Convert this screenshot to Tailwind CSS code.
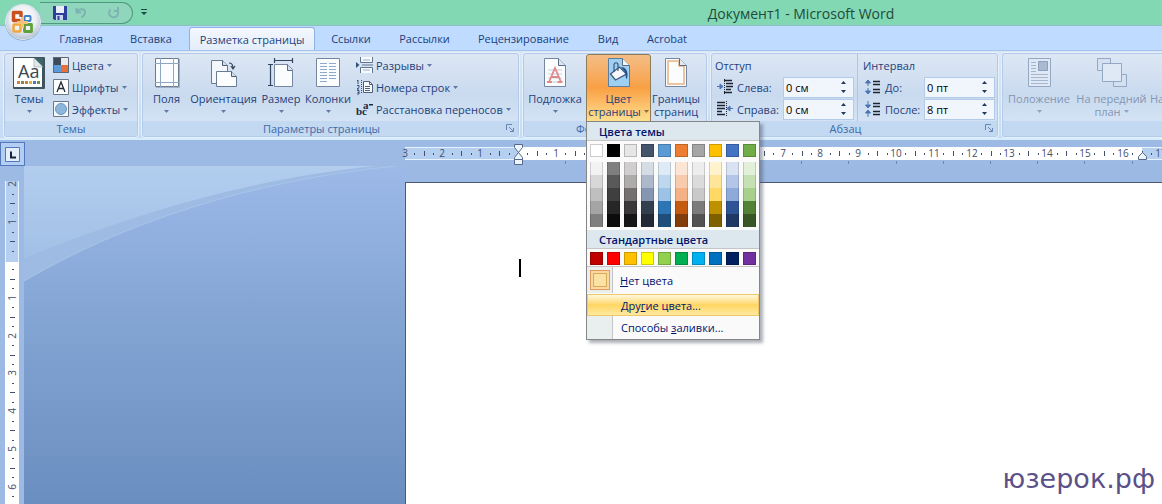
<!DOCTYPE html>
<html lang="ru">
<head>
    <meta charset="UTF-8">
    <meta name="viewport" content="width=device-width, initial-scale=1.0">
    <title>Документ1 - Microsoft Word</title>
    <script src="https://cdn.jsdelivr.net/npm/@tailwindcss/browser@4"></script>
</head>

<body class="min-h-screen flex flex-col overflow-hidden bg-[#9cbae3] font-['Open_Sans','Noto_Sans',sans-serif] text-[11px] leading-[13px] text-[#1f3f7a]">

<!-- Title bar -->
<header class="relative h-[26px] shrink-0 bg-[#82d8b3] border-b border-[#8fbfc4] flex items-start">
    <button type="button" aria-label="Office" class="absolute left-[4px] top-[3px] z-20">
        <svg class="w-[38px] h-[38px]" viewBox="0 0 38 38">
            <defs>
                <radialGradient id="orb" cx="50%" cy="40%" r="60%">
                    <stop offset="0" stop-color="#ffffff"/>
                    <stop offset="0.6" stop-color="#eceff4"/>
                    <stop offset="1" stop-color="#b4bfd2"/>
                </radialGradient>
            </defs>
            <circle cx="19" cy="19.500" r="18" fill="#6f97a5"/>
            <circle cx="19" cy="19" r="17.500" fill="url(#orb)" stroke="#dfe9f2" stroke-width="1"/>
            <path d="M16.500 17.500H9.500V9.500H17V14" fill="none" stroke="#c9501c" stroke-width="3.500" stroke-linejoin="round"/>
            <rect x="20.500" y="13" width="6" height="5" rx="1" fill="none" stroke="#3f7fc8" stroke-width="2"/>
            <rect x="9.500" y="21.500" width="7" height="7" rx="1" fill="none" stroke="#f0a73a" stroke-width="2.500"/>
            <path d="M20.500 21.500v7h7v-7z" fill="none" stroke="#5fa03c" stroke-width="2.800" stroke-linejoin="round"/>
            <path d="M13 18h11v3H13z" fill="#f5c27a"/>
            <path d="M17 14h3v11h-3z" fill="#f5c27a"/>
        </svg>
    </button>
    <div class="ml-[40px] mt-[2px] w-[93px] h-[22px] rounded-r-full border border-l-0 border-[#4f9a80] bg-[#8fd6bc] flex items-center gap-[12px] pl-[13px]">
        <button type="button" aria-label="Сохранить">
            <svg class="w-[14px] h-[14px]" viewBox="0 0 14 14">
                <path d="M0 0h14v14H1.500L0 12.500z" fill="#2f3f9c"/>
                <path d="M3 0h8v7H3z" fill="#e9eefa"/>
                <path d="M3 9h7v5H3z" fill="#c9d3ee"/>
                <path d="M4.500 10h2v4h-2z" fill="#2f3f9c"/>
            </svg>
        </button>
        <button type="button" aria-label="Отменить" class="-ml-[4px]">
            <svg class="w-[14px] h-[14px]" viewBox="0 0 14 14" fill="none" stroke="#7db2b2" stroke-width="2"><path d="M1.500 2v4.500H6M2 6c2-3.500 9-4 8 1-.5 2-2 3.500-3.500 4.500"/></svg>
        </button>
        <button type="button" aria-label="Вернуть" class="ml-[6px]">
            <svg class="w-[14px] h-[14px]" viewBox="0 0 14 14" fill="none" stroke="#7db2b2" stroke-width="2"><path d="M3.500 3.500a4.500 4.500 0 1 0 7 1M11 1v4H7"/></svg>
        </button>
    </div>
    <button type="button" aria-label="Настройка панели быстрого доступа" class="ml-[8px] mt-[8px]">
        <svg class="w-[6px] h-[8px]" viewBox="0 0 6 8" fill="#1c4a4c"><path d="M0 1h6v1H0zM0 4h6L3 7z"/></svg>
    </button>
    <h1 class="absolute inset-y-0 right-0 left-[440px] flex items-center justify-center pt-[2px] text-[14px] leading-[20px] text-[#1f4a3c]">Документ1 - Microsoft Word</h1>
</header>

<!-- Tabs -->
<nav class="h-[24px] shrink-0 bg-[#bfdbff] flex pl-[45px] pt-px text-[#1c3f7c]">
    <button type="button" class="w-[72px]">Главная</button>
    <button type="button" class="w-[68px]">Вставка</button>
    <button type="button" class="ml-[4px] mr-[2px] w-[126px] rounded-t-[3px] border border-b-0 border-[#8db2e3] bg-gradient-to-b from-[#f4f8fe] to-[#e3edf9]">Разметка страницы</button>
    <button type="button" class="w-[68px]">Ссылки</button>
    <button type="button" class="w-[79px]">Рассылки</button>
    <button type="button" class="w-[119px]">Рецензирование</button>
    <button type="button" class="w-[50px]">Вид</button>
    <button type="button" class="w-[68px]">Acrobat</button>
</nav>

<!-- Ribbon -->
<section class="relative z-10 h-[90px] shrink-0 border-t border-[#a3c5ee] bg-gradient-to-b from-[#dbe6f5] to-[#c4dcf5] border-b-2 border-b-[#d6ecfb] flex gap-[4px] pl-[4px] pt-[2px]">

    <!-- Themes -->
    <div class="w-[134px] h-[84px] shrink-0 flex flex-col rounded-[3px] border border-[#b3cbe8] ring-1 ring-[#e6f1fc] bg-gradient-to-b from-[#dde7f4] via-[#c9daef] to-[#d9e8f8]">
        <div class="h-[67px] flex">
            <button type="button" class="w-[48px] flex flex-col items-center pt-[3px]">
                <svg class="w-[32px] h-[32px]" viewBox="0 0 32 32">
                    <path d="M.5.5h31v31H.5z" fill="#fdfefe" stroke="#44545e"/>
                    <path d="M29 1h2v30H1v-1h28z" fill="#3c5560"/>
                    <path d="M21 1h9v9z" fill="#3d6468"/>
                    <path d="M21 1v9h9z" fill="#dfe7ea" stroke="#8495a0" stroke-width=".5"/>
                    <text x="5" y="21" font-size="18" fill="#3b464e" font-family="Open Sans">Aa</text>
                    <path d="M4 24h3v3H4zM12 24h3v3h-3z" fill="#c97d4e"/>
                    <path d="M8 24h3v3H8zM24 24h3v3h-3z" fill="#7d8a4c"/>
                    <path d="M16 24h3v3h-3z" fill="#e0b23c"/>
                    <path d="M20 24h3v3h-3z" fill="#4f78b8"/>
                </svg>
                <span class="mt-[3px]">Темы</span>
                <svg class="w-[5px] h-[3px] mt-[5px]" viewBox="0 0 5 3" fill="#5f7aa6"><path d="M0 0h5L2.500 3z"/></svg>
            </button>
            <div class="flex flex-col">
                <button type="button" class="h-[22px] flex items-center gap-[3px]">
                    <svg class="w-[16px] h-[16px]" viewBox="0 0 16 16"><path d="M0 0h8v8H0z" fill="#3c4a5c"/><path d="M8 0h8v8H8z" fill="#e9ebec"/><path d="M0 8h8v8H0z" fill="#5c9bd8"/><path d="M8 8h8v8H8z" fill="#e8713a"/><path d="M.5.5h15v15H.5z" fill="none" stroke="#5a6878"/></svg>
                    <span>Цвета</span>
                    <svg class="w-[5px] h-[3px]" viewBox="0 0 5 3" fill="#5f7aa6"><path d="M0 0h5L2.500 3z"/></svg>
                </button>
                <button type="button" class="h-[22px] flex items-center gap-[3px]">
                    <svg class="w-[16px] h-[16px]" viewBox="0 0 16 16"><path d="M.5.5h15v15H.5z" fill="#fcfdfd" stroke="#6c7a88"/><path d="M4 13l4-10 4 10M5.500 9.500h5" fill="none" stroke="#222c36" stroke-width="1.300"/></svg>
                    <span>Шрифты</span>
                    <svg class="w-[5px] h-[3px]" viewBox="0 0 5 3" fill="#5f7aa6"><path d="M0 0h5L2.500 3z"/></svg>
                </button>
                <button type="button" class="h-[22px] flex items-center gap-[3px]">
                    <svg class="w-[16px] h-[16px]" viewBox="0 0 16 16"><path d="M.5.5h15v15H.5z" fill="#f5f8fa" stroke="#6c7a88"/><circle cx="8" cy="8" r="5.500" fill="#8db6dc" stroke="#6b96c4"/></svg>
                    <span>Эффекты</span>
                    <svg class="w-[5px] h-[3px]" viewBox="0 0 5 3" fill="#5f7aa6"><path d="M0 0h5L2.500 3z"/></svg>
                </button>
            </div>
        </div>
        <div class="flex-1 flex items-center justify-center bg-[#c2d9f1] text-[#3e6aaa]">Темы</div>
    </div>

    <!-- Page setup -->
    <div class="w-[377px] h-[84px] shrink-0 flex flex-col rounded-[3px] border border-[#b3cbe8] ring-1 ring-[#e6f1fc] bg-gradient-to-b from-[#dde7f4] via-[#c9daef] to-[#d9e8f8]">
        <div class="h-[67px] flex pl-[4px]">
            <button type="button" class="w-[39px] flex flex-col items-center pt-[3px]">
                <svg class="w-[26px] h-[32px]" viewBox="0 0 26 32"><path d="M1.500 1.500h23v28h-23z" fill="#fbfcfe" stroke="#6a7c92"/><path d="M2 30.500h23.500V2" fill="none" stroke="#9fb0c6"/><path d="M6.500 1v29M19.500 1v29M1 6.500h24M1 25.500h24" stroke="#8ea6c2" stroke-width="1"/></svg>
                <span class="mt-[3px]">Поля</span>
                <svg class="w-[5px] h-[3px] mt-[5px]" viewBox="0 0 5 3" fill="#5f7aa6"><path d="M0 0h5L2.500 3z"/></svg>
            </button>
            <button type="button" class="w-[75px] flex flex-col items-center pt-[3px]">
                <svg class="w-[28px] h-[32px]" viewBox="0 0 28 32"><path d="M1.500 3.500h11l5 5v18h-16z" fill="#f3f7fc" stroke="#6a7c92"/><path d="M12.500 3.500v5h5" fill="#cfdcec" stroke="#4d5c70"/><path d="M6.500 14.500h15l5 5v10h-20z" fill="#fbfdff" stroke="#6a7c92"/><path d="M21.500 14.500v5h5" fill="#cfdcec" stroke="#4d5c70"/><path d="M19 6c3 0 4 2 4 5M21 9l2 3 2-3" fill="none" stroke="#34465e" stroke-width="1.200"/></svg>
                <span class="mt-[3px]">Ориентация</span>
                <svg class="w-[5px] h-[3px] mt-[5px]" viewBox="0 0 5 3" fill="#5f7aa6"><path d="M0 0h5L2.500 3z"/></svg>
            </button>
            <button type="button" class="w-[40px] flex flex-col items-center pt-[3px]">
                <svg class="w-[26px] h-[32px]" viewBox="0 0 26 32"><path d="M6.500 7.500h13l5 5v17h-18z" fill="#fbfcfe" stroke="#7486a0"/><path d="M19.500 7.500v6h5" fill="#d5e0ee" stroke="#5b6c84"/><path d="M6 3.500h19M6.500 1v5M24.500 1v5M2.500 7v22M0 7.500h5M0 28.500h5" stroke="#33455e" stroke-width="1.200" fill="none"/></svg>
                <span class="mt-[3px]">Размер</span>
                <svg class="w-[5px] h-[3px] mt-[5px]" viewBox="0 0 5 3" fill="#5f7aa6"><path d="M0 0h5L2.500 3z"/></svg>
            </button>
            <button type="button" class="w-[54px] flex flex-col items-center pt-[3px]">
                <svg class="w-[26px] h-[32px]" viewBox="0 0 26 32"><path d="M1.500 1.500h23v28h-23z" fill="#fbfcfe" stroke="#7486a0"/><path d="M5 6.500h7M14 6.500h7M5 9.500h7M14 9.500h7M5 12.500h7M14 12.500h7M5 15.500h7M14 15.500h7M5 18.500h7M14 18.500h7M5 21.500h7M14 21.500h7M5 24.500h7" stroke="#8fa9cc"/></svg>
                <span class="mt-[3px]">Колонки</span>
                <svg class="w-[5px] h-[3px] mt-[5px]" viewBox="0 0 5 3" fill="#5f7aa6"><path d="M0 0h5L2.500 3z"/></svg>
            </button>
            <div class="flex flex-col pl-[1px]">
                <button type="button" class="h-[22px] flex items-center gap-[3px]">
                    <svg class="w-[17px] h-[16px]" viewBox="0 0 17 16"><path d="M4.500 0v5.500h12V0M4.500 16v-5.500h12V16" fill="#f7fafd" stroke="#5f7590"/><path d="M6 8h11" stroke="#5f7590"/><path d="M7 3h7M7 13h7" stroke="#9bb0ca"/><path d="M0 5l3.500 3L0 11z" fill="#33507c"/></svg>
                    <span>Разрывы</span>
                    <svg class="w-[5px] h-[3px]" viewBox="0 0 5 3" fill="#5f7aa6"><path d="M0 0h5L2.500 3z"/></svg>
                </button>
                <button type="button" class="h-[22px] flex items-center gap-[3px]">
                    <svg class="w-[17px] h-[16px]" viewBox="0 0 17 16"><path d="M7.500 2.500h6l3 3v8h-9z" fill="#f7fafd" stroke="#4c5f7c"/><path d="M13.500 2.500v3h3M9 7.500h5M9 9.500h5M9 11.500h5" fill="none" stroke="#4c5f7c"/><path d="M1 2l1-1v4M1 6.500h2v2L1 10h2M1 11.500h2v3.500H1M1.500 13.500H3" fill="none" stroke="#33507c" stroke-width="1"/><path d="M5.500 1v14" stroke="#33507c" stroke-dasharray="1 1"/></svg>
                    <span>Номера строк</span>
                    <svg class="w-[5px] h-[3px]" viewBox="0 0 5 3" fill="#5f7aa6"><path d="M0 0h5L2.500 3z"/></svg>
                </button>
                <button type="button" class="h-[22px] flex items-center gap-[3px]">
                    <svg class="w-[17px] h-[16px] overflow-visible" viewBox="0 0 17 16" fill="#1d2a3c" font-family="Liberation Serif" font-weight="bold" font-size="11"><text x="0" y="14">bc</text><text x="7" y="8">a</text><path d="M13 3h4v1.500h-4z"/></svg>
                    <span>Расстановка переносов</span>
                    <svg class="w-[5px] h-[3px]" viewBox="0 0 5 3" fill="#5f7aa6"><path d="M0 0h5L2.500 3z"/></svg>
                </button>
            </div>
        </div>
        <div class="relative flex-1 flex items-center justify-center bg-[#c2d9f1] text-[#3e6aaa] pr-[18px]">Параметры страницы
            <button type="button" aria-label="Параметры страницы: подробнее" class="absolute right-[4px] top-[3px]">
                <svg class="w-[8px] h-[8px]" viewBox="0 0 8 8" fill="none" stroke="#6687b4"><path d="M.5 6V.5H6M3 3l4 4M7.500 4v3.500H4"/></svg>
            </button>
        </div>
    </div>

    <!-- Page background -->
    <div class="relative z-10 w-[184px] h-[84px] shrink-0 flex flex-col rounded-[3px] border border-[#b3cbe8] ring-1 ring-[#e6f1fc] bg-gradient-to-b from-[#dde7f4] via-[#c9daef] to-[#d9e8f8]">
        <div class="h-[67px] flex">
            <button type="button" class="w-[62px] flex flex-col items-center pt-[3px]">
                <svg class="w-[24px] h-[32px]" viewBox="0 0 24 32"><path d="M1.500 1.500h14l7 7v21h-21z" fill="#fbfcfe" stroke="#7486a0"/><path d="M15.500 1.500v7h7" fill="#dbe4ef" stroke="#5b6c84"/><path d="M5 13h14M5 17h14M5 21h14M5 25h14" stroke="#c3cfdf"/><path d="M6 25l6-14 6 14M8.500 20h7M4 25h5M14.500 25h5" fill="none" stroke="#e08a8c" stroke-width="1.800"/></svg>
                <span class="mt-[3px]">Подложка</span>
                <svg class="w-[5px] h-[3px] mt-[5px]" viewBox="0 0 5 3" fill="#5f7aa6"><path d="M0 0h5L2.500 3z"/></svg>
            </button>

            <div class="relative">
                <button type="button" aria-haspopup="true" aria-expanded="true" class="w-[65px] h-[68px] flex flex-col items-center pt-[2px] rounded-t-[3px] border border-[#8f7c58] bg-gradient-to-b from-[#f3bd84] via-[#f9a043] to-[#fddf8e]">
                    <svg class="w-[24px] h-[32px]" viewBox="0 0 24 32"><path d="M1.500 1.500h14l7 7v21h-21z" fill="#9fd0f2" stroke="#5b7ea0"/><path d="M15.500 1.500v7h7" fill="#f4f9fd" stroke="#5b6c84"/><path d="M3.500 17l9-7 7 7-11 6z" fill="#f5f7fa" stroke="#3f5878" stroke-width="1.300"/><path d="M7 15V8c0-3 4-3 4 0v6" fill="none" stroke="#3f5878" stroke-width="1.200"/><path d="M14 10c4 0 8 3 6 12-2-1-1-5-2-7z" fill="#24548f"/></svg>
                    <span class="mt-[3px]">Цвет</span>
                    <span class="flex items-center gap-[3px]">страницы<svg class="w-[5px] h-[3px]" viewBox="0 0 5 3" fill="#8a6f3c"><path d="M0 0h5L2.500 3z"/></svg></span>
                </button>

                <!-- Colour menu -->
                <div class="absolute left-0 top-[67px] w-[174px] bg-[#fafafa] border border-[#868686] shadow-[3px_3px_3px_rgba(70,80,100,0.45)] text-[#00156e]">
                    <h2 class="h-[19px] flex items-center pl-[12px] pt-[1px] bg-[#dde7ee] border-b border-[#c5c5c5] font-semibold">Цвета темы</h2>
                    <div id="theme" class="flex gap-[4px] px-[3px] pt-[3px]"></div>
                    <div id="shades" class="flex gap-[4px] px-[3px] pt-[5px] pb-[3px]"></div>
                    <h2 class="h-[19px] flex items-center pl-[12px] bg-[#dde7ee] border-b border-[#c5c5c5] font-semibold">Стандартные цвета</h2>
                    <div id="standard" class="flex gap-[4px] px-[3px] pt-[3px] pb-[1px]"></div>
                    <button type="button" class="w-full h-[27px] border-t border-[#c5c5c5] flex items-center">
                        <span class="w-[26px] h-full border-r border-[#c5c5c5] bg-[#e9eeee] flex items-center pl-[3px]"><span class="w-[20px] h-[20px] border border-[#e09a5c] bg-[#fbd9a0] p-[2px]"><span class="block w-full h-full border border-[#d9a95e] bg-[#fce3a4]"></span></span></span>
                        <span class="pl-[7px]"><u>Н</u>ет цвета</span>
                    </button>
                    <button type="button" class="w-full h-[22px] mt-px flex items-center pl-[33px] border border-[#ecc96a] bg-gradient-to-b from-[#fff8dc] via-[#ffd661] to-[#ffe9a0]">Дру<u>г</u>ие цвета...</button>
                    <button type="button" class="w-full h-[23px] flex items-center">
                        <span class="w-[26px] h-full border-r border-[#c5c5c5] bg-[#e9eeee]"></span>
                        <span class="pl-[8px]">Способы <u>з</u>аливки...</span>
                    </button>
                </div>
            </div>

            <button type="button" class="w-[50px] flex flex-col items-center pt-[3px]">
                <svg class="w-[24px] h-[32px]" viewBox="0 0 24 32"><path d="M1.500 1.500h14l7 7v21h-21z" fill="#fbfcfe" stroke="#7486a0"/><path d="M4 4h11v5h5v18H4z" fill="none" stroke="#e6b284" stroke-width="1.500"/><path d="M15.500 1.500v7h7" fill="#e2e9f2" stroke="#5b6c84"/></svg>
                <span class="mt-[3px]">Границы<br>страниц</span>
            </button>
        </div>
        <div class="flex-1 flex items-center pl-[52px] bg-[#c2d9f1] text-[#3e6aaa]">Фон</div>
    </div>

    <!-- Paragraph -->
    <div class="w-[287px] h-[84px] shrink-0 flex flex-col rounded-[3px] border border-[#b3cbe8] ring-1 ring-[#e6f1fc] bg-gradient-to-b from-[#dde7f4] via-[#c9daef] to-[#d9e8f8]">
        <div class="h-[67px] flex pl-[3px]">
            <div class="w-[143px] border-r border-[#b0c6e2]">
                <div class="h-[22px] flex items-center">Отступ</div>
                <div class="h-[22px] flex items-center">
                    <svg class="w-[16px] h-[16px] ml-[2px]" viewBox="0 0 16 16"><path d="M7 1.500h8M9 4.500h7M9 7.500h7M9 10.500h5M7 13.500h8" stroke="#1c2431" stroke-width="1.500"/><path d="M0 7.500h4M3 5l3 2.500L3 10z" fill="#4a74b4" stroke="#4a74b4"/><path d="M7.500 0v16" stroke="#1c2431" stroke-dasharray="1 1"/></svg>
                    <label for="left" class="ml-[4px] w-[46px]">Слева:</label>
                    <div class="w-[71px] h-[21px] flex items-center bg-[#f0f6fc] border border-[#b3cbe8]">
                        <input id="left" type="text" value="0 см" class="w-[54px] pl-[2px] text-black outline-none">
                        <svg class="w-[5px] h-[14px] ml-[3px]" viewBox="0 0 5 14" fill="#22395c"><path d="M0 4h5L2.500 1zM0 10h5L2.500 13z"/></svg>
                    </div>
                </div>
                <div class="h-[22px] flex items-center">
                    <svg class="w-[16px] h-[16px] ml-[2px]" viewBox="0 0 16 16"><path d="M0 1.500h8M0 4.500h8M0 7.500h8M0 10.500h5M0 13.500h8" stroke="#1c2431" stroke-width="1.500"/><path d="M12 7.500h4M13 5l-3 2.500 3 2.500z" fill="#4a74b4" stroke="#4a74b4"/><path d="M9.500 0v16" stroke="#1c2431" stroke-dasharray="1 1"/></svg>
                    <label for="right" class="ml-[4px] w-[46px]">Справа:</label>
                    <div class="w-[71px] h-[21px] flex items-center bg-[#f0f6fc] border border-[#b3cbe8]">
                        <input id="right" type="text" value="0 см" class="w-[54px] pl-[2px] text-black outline-none">
                        <svg class="w-[5px] h-[14px] ml-[3px]" viewBox="0 0 5 14" fill="#22395c"><path d="M0 4h5L2.500 1zM0 10h5L2.500 13z"/></svg>
                    </div>
                </div>
            </div>
            <div class="pl-[5px]">
                <div class="h-[22px] flex items-center">Интервал</div>
                <div class="h-[22px] flex items-center">
                    <svg class="w-[16px] h-[16px] ml-[2px]" viewBox="0 0 16 16"><path d="M8 2.500h7M8 5.500h7M8 10.500h7M8 13.500h7" stroke="#1c2431" stroke-width="1.500"/><path d="M3 3v4M3 9v4M.5 4L3 1l2.500 3zM.5 12L3 15l2.500-3z" fill="#4a74b4" stroke="#4a74b4"/></svg>
                    <label for="before" class="ml-[4px] w-[39px]">До:</label>
                    <div class="w-[71px] h-[21px] flex items-center bg-[#f0f6fc] border border-[#b3cbe8]">
                        <input id="before" type="text" value="0 пт" class="w-[54px] pl-[2px] text-black outline-none">
                        <svg class="w-[5px] h-[14px] ml-[3px]" viewBox="0 0 5 14" fill="#22395c"><path d="M0 4h5L2.500 1zM0 10h5L2.500 13z"/></svg>
                    </div>
                </div>
                <div class="h-[22px] flex items-center">
                    <svg class="w-[16px] h-[16px] ml-[2px]" viewBox="0 0 16 16"><path d="M8 2.500h7M8 5.500h7M8 10.500h7M8 13.500h7" stroke="#1c2431" stroke-width="1.500"/><path d="M3 0v4M3 12v4M.5 4L3 7l2.500-3zM.5 12L3 9l2.500 3z" fill="#4a74b4" stroke="#4a74b4"/></svg>
                    <label for="after" class="ml-[4px] w-[39px]">После:</label>
                    <div class="w-[71px] h-[21px] flex items-center bg-[#f0f6fc] border border-[#b3cbe8]">
                        <input id="after" type="text" value="8 пт" class="w-[54px] pl-[2px] text-black outline-none">
                        <svg class="w-[5px] h-[14px] ml-[3px]" viewBox="0 0 5 14" fill="#22395c"><path d="M0 4h5L2.500 1zM0 10h5L2.500 13z"/></svg>
                    </div>
                </div>
            </div>
        </div>
        <div class="relative flex-1 flex items-center justify-center bg-[#c2d9f1] text-[#3e6aaa] pr-[18px]">Абзац
            <button type="button" aria-label="Абзац: подробнее" class="absolute right-[4px] top-[3px]">
                <svg class="w-[8px] h-[8px]" viewBox="0 0 8 8" fill="none" stroke="#6687b4"><path d="M.5 6V.5H6M3 3l4 4M7.500 4v3.500H4"/></svg>
            </button>
        </div>
    </div>

    <!-- Arrange -->
    <div class="flex-1 min-w-0 h-[84px] flex flex-col overflow-hidden rounded-l-[3px] border border-r-0 border-[#b3cbe8] ring-1 ring-[#e6f1fc] bg-gradient-to-b from-[#dde7f4] via-[#c9daef] to-[#d9e8f8] text-[#8496b2]">
        <div class="h-[67px] flex pl-[1px]">
            <button type="button" disabled class="w-[70px] shrink-0 flex flex-col items-center pt-[3px]">
                <svg class="w-[24px] h-[32px]" viewBox="0 0 24 32"><path d="M1.500 1.500h22v28h-22z" fill="#dfe8f4" stroke="#94a7c3"/><path d="M11.500 4.500h9v9h-9z" fill="#a9bad2" stroke="#8b9fbd"/><path d="M4 5.500h5M4 8.500h5M4 11.500h5M4 14.500h5M4 17.500h17M4 20.500h17M4 23.500h17M4 26.500h17" stroke="#a3b5cf"/></svg>
                <span class="mt-[3px]">Положение</span>
                <svg class="w-[5px] h-[3px] mt-[5px]" viewBox="0 0 5 3" fill="#8ea3c4"><path d="M0 0h5L2.500 3z"/></svg>
            </button>
            <button type="button" disabled class="w-[75px] shrink-0 flex flex-col items-center pt-[3px]">
                <svg class="w-[32px] h-[32px]" viewBox="0 0 32 32"><path d="M1.500 1.500h13v12h-13zM17.500 17.500h13v12h-13z" fill="#d5e1f0" stroke="#94a7c3"/><path d="M6.500 6.500h19v18h-19z" fill="#dfe8f5" stroke="#94a7c3"/></svg>
                <span class="mt-[3px] whitespace-nowrap">На передний</span>
                <span class="flex items-center gap-[3px]">план<svg class="w-[5px] h-[3px]" viewBox="0 0 5 3" fill="#8ea3c4"><path d="M0 0h5L2.500 3z"/></svg></span>
            </button>
            <button type="button" disabled class="shrink-0 flex flex-col items-start pl-px pt-[38px]">На</button>
        </div>
        <div class="flex-1 bg-[#c2d9f1]"></div>
    </div>
</section>

<!-- Horizontal ruler -->
<div class="h-[26px] shrink-0 flex">
    <button type="button" aria-label="Тип табуляции" class="w-[25px] h-[24px] mt-[2px] border border-[#5478bd] bg-[#b4cdf2] flex items-center justify-center">
        <svg class="w-[15px] h-[15px]" viewBox="0 0 15 15"><path d="M.5.5h14v14H.5z" fill="#e4eefb" stroke="#5478bd"/><path d="M5 4.500h2v5h4v2H5z" fill="#16233c"/></svg>
    </button>
    <svg id="hruler" class="flex-1 min-w-0 h-[26px] overflow-hidden" font-family="Open Sans" font-size="10" fill="#44506a" text-anchor="middle"></svg>
</div>

<!-- Workspace -->
<main class="flex-1 min-h-[338px] flex">
    <div class="w-[24px] shrink-0">
        <svg id="vruler" class="w-[24px] h-[338px]" font-family="Open Sans" font-size="10" fill="#44506a" text-anchor="middle"></svg>
    </div>
    <div class="relative flex-1 flex flex-col bg-gradient-to-b from-[#9cb9e8] via-[#81a3d2] to-[#6a8ebf] pl-[381px]">
        <svg class="absolute left-0 top-0 w-[405px] h-[120px]" viewBox="0 0 405 120">
            <defs>
                <linearGradient id="sky" x1="0" y1="0" x2="0" y2="1">
                    <stop offset="0" stop-color="#b2cdee"/>
                    <stop offset="1" stop-color="#a2c0e6"/>
                </linearGradient>
            </defs>
            <path d="M0 0h372C230 14 100 56 0 115z" fill="#9ebbe3"/>
            <path d="M0 115C100 56 230 14 372 0" fill="none" stroke="#a9c5ea"/>
            <path d="M0 0h350C220 14 110 48 0 92z" fill="url(#sky)"/>
        </svg>
        <div class="h-[16px] bg-[#9cb9e3]"></div>
        <article class="relative flex-1 bg-white border-t border-l border-[#4b5878]">
            <div class="absolute left-[113px] top-[76px] w-[2px] h-[18px] bg-black"></div>
            <p class="absolute right-[7px] bottom-[10px] font-['DejaVu_Sans',sans-serif] text-[27px] leading-[30px] text-[#5b5088]">юзерок.рф</p>
        </article>
    </div>
</main>

<script>
    // colour swatches
    const theme = ['#ffffff', '#000000', '#e7e6e6', '#44546a', '#5b9bd5', '#ed7d31', '#a5a5a5', '#ffc000', '#4472c4', '#70ad47'];
    const standard = ['#c00000', '#ff0000', '#ffc000', '#ffff00', '#92d050', '#00b050', '#00b0f0', '#0070c0', '#002060', '#7030a0'];
    const shades = [
        ['#f2f2f2', '#d8d8d8', '#bfbfbf', '#a5a5a5', '#7f7f7f'],
        ['#7f7f7f', '#595959', '#3f3f3f', '#262626', '#0c0c0c'],
        ['#d0cece', '#aeabab', '#757070', '#3a3838', '#171616'],
        ['#d6dce4', '#adb9ca', '#8496b0', '#323f4f', '#222a35'],
        ['#deebf6', '#bdd7ee', '#9cc3e5', '#2e75b5', '#1e4e79'],
        ['#fbe5d5', '#f7cbac', '#f4b183', '#c55a11', '#833c0b'],
        ['#ededed', '#dbdbdb', '#c9c9c9', '#7b7b7b', '#525252'],
        ['#fff2cc', '#fee599', '#ffd965', '#bf9000', '#7f6000'],
        ['#d9e2f3', '#b4c6e7', '#8eaadb', '#2f5496', '#1f3864'],
        ['#e2efd9', '#c5e0b3', '#a8d08d', '#538135', '#375623']
    ];
    const swatch = c => `<button type="button" aria-label="${c}" class="w-[13px] h-[13px] border border-black/20" style="background:${c}"></button>`;
    document.getElementById('theme').innerHTML = theme.map(swatch).join('');
    document.getElementById('standard').innerHTML = standard.map(swatch).join('');
    document.getElementById('shades').innerHTML = shades.map(col =>
        '<div class="w-[13px] flex flex-col">' +
        col.map(c => `<button type="button" aria-label="${c}" class="w-full h-[13px] border-x border-black/15" style="background:${c}"></button>`).join('') +
        '</div>').join('');

    // rulers: one centimetre is 37.8px, with a dot at each quarter and a dash at each half
    const cm = 37.8;

    function marks(from, to, draw) {
        let out = '';
        for (let q = from * 4; q <= to * 4; q++) {
            if (q !== 0) out += draw(q / 4 * cm, q % 4 === 0 ? 'number' : q % 2 === 0 ? 'half' : 'quarter', Math.abs(q / 4));
        }
        return out;
    }

    const zeroX = 493;
    let h = '<rect x="380" y="7" width="2000" height="13" fill="#e8f2fd"/><rect x="380" y="8" width="2000" height="11" fill="#b4cff0"/>' +
        `<rect x="${zeroX}" y="7" width="624" height="13" fill="#fff"/>`;
    h += marks(-3, 17, (d, kind, n) => {
        const x = Math.round(zeroX + d);
        if (kind === 'number') return `<text x="${x}" y="17">${n}</text>`;
        if (kind === 'half') return `<rect x="${x}" y="11" width="1" height="5"/>`;
        return `<rect x="${x}" y="13" width="1" height="2"/>`;
    });
    for (let i = 1; i < 16; i++) {
        h += `<rect x="${Math.round(zeroX + i * 47.2)}" y="21" width="1" height="3" fill="#6c86b4"/>`;
    }
    h += `<g fill="#eef5fd" stroke="#55698c"><path d="M${zeroX - 4}.5 4.500h8v3l-4 5-4-5zM${zeroX - 4}.5 19.500v-2l4-5 4 5v2zM${zeroX - 4}.5 19.500h8v5h-8z"/><path d="M1113.500 19.500v-3l4-4 4 4v3z"/></g>`;
    document.getElementById('hruler').innerHTML = h;

    const zeroY = 94;
    let v = '<rect x="5" y="15" width="14" height="340" fill="#e8f2fd"/><rect x="6" y="15" width="12" height="81" fill="#b4cff0"/>' +
        '<rect x="5" y="96" width="14" height="260" fill="#fff"/>';
    v += marks(-2, 6.25, (d, kind, n) => {
        const y = Math.round(zeroY + d);
        if (kind === 'number') return `<text transform="translate(16 ${y}) rotate(-90)">${n}</text>`;
        if (kind === 'half') return `<rect x="10" y="${y}" width="5" height="1"/>`;
        return `<rect x="12" y="${y}" width="2" height="1"/>`;
    });
    document.getElementById('vruler').innerHTML = v;
</script>

</body>
</html>
